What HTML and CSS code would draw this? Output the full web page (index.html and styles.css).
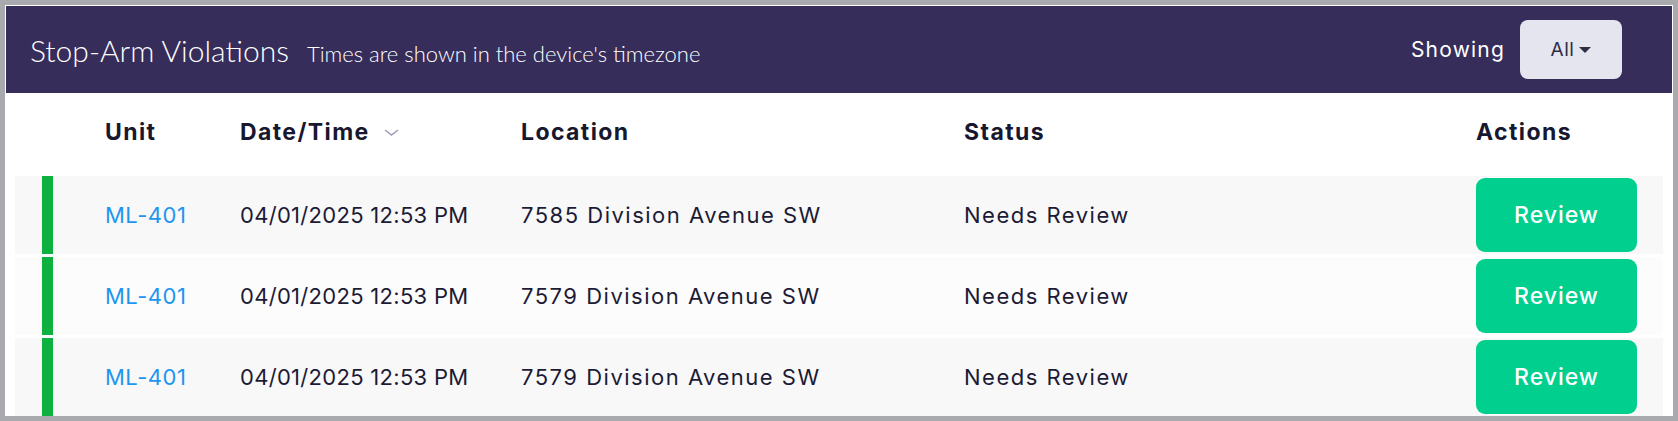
FILE: index.html
```html
<!DOCTYPE html>
<html lang="en">
<head>
<meta charset="utf-8">
<title>Stop-Arm Violations</title>
<link rel="stylesheet" href="styles.css">
</head>
<body>
<div class="frame">
  <header class="topbar">
    <div class="titles">
      <h1 class="title">Stop-Arm Violations</h1>
      <span class="subtitle">Times are shown in the device's timezone</span>
    </div>
    <div class="filter">
      <span class="showing">Showing</span>
      <button class="dropdown">All <span class="caret"></span></button>
    </div>
  </header>
  <div class="table">
    <div class="grid head">
      <span></span><span></span>
      <span class="th">Unit</span>
      <span class="th sort">Date/Time
        <svg class="chev" width="15" height="7" viewBox="0 0 15 7"><path d="M1 1 L7.5 6 L14 1" fill="none" stroke="#9c9cb3" stroke-width="1.5"/></svg>
      </span>
      <span class="th">Location</span>
      <span class="th">Status</span>
      <span class="th">Actions</span>
    </div>
    <div class="grid row odd">
      <span class="bar"></span><span></span>
      <a class="unit">ML-401</a>
      <span class="td num">04/01/2025 12:53 PM</span>
      <span class="td">7585 Division Avenue SW</span>
      <span class="td">Needs Review</span>
      <button class="review">Review</button>
    </div>
    <div class="grid row even">
      <span class="bar"></span><span></span>
      <a class="unit">ML-401</a>
      <span class="td num">04/01/2025 12:53 PM</span>
      <span class="td">7579 Division Avenue SW</span>
      <span class="td">Needs Review</span>
      <button class="review">Review</button>
    </div>
    <div class="grid row odd">
      <span class="bar"></span><span></span>
      <a class="unit">ML-401</a>
      <span class="td num">04/01/2025 12:53 PM</span>
      <span class="td">7579 Division Avenue SW</span>
      <span class="td">Needs Review</span>
      <button class="review">Review</button>
    </div>
  </div>
</div>
</body>
</html>
```
FILE: styles.css
```css
* { box-sizing: border-box; }
html, body { margin: 0; padding: 0; background: #ffffff; }
body { font-family: "Inter", "Open Sans", sans-serif; color: #1c1b36; }

.frame {
  width: 1678px;
  height: 421px;
  border: 5px solid #a9aaad;
  padding: 1px;
  overflow: hidden;
  background: #ffffff;
}

.topbar {
  height: 87px;
  background: #362d5b;
  display: flex;
  align-items: center;
  justify-content: space-between;
  padding: 0 50px 0 24px;
}
.titles { display: flex; align-items: baseline; gap: 18px; }
.title {
  margin: 0;
  font-family: "Lato", sans-serif;
  font-weight: 300;
  font-size: 30px;
  color: #ffffff;
}
.subtitle {
  font-family: "Lato", sans-serif;
  font-weight: 300;
  font-size: 22px;
  color: #ffffff;
}
.filter { display: flex; align-items: center; gap: 15px; }
.showing { color: #ffffff; font-size: 21px; letter-spacing: 1.2px; }
.dropdown {
  width: 102px;
  height: 59px;
  border: none;
  border-radius: 8px;
  background: #e5e5f0;
  color: #2f2d45;
  font-family: "Inter", sans-serif;
  font-size: 19px;
  letter-spacing: 0.5px;
  display: flex;
  align-items: center;
  justify-content: center;
  gap: 5px;
  padding: 0;
}
.caret {
  width: 0; height: 0;
  border-left: 6px solid transparent;
  border-right: 6px solid transparent;
  border-top: 6px solid #2f2d45;
  margin-top: 1px;
}

.table { padding: 0 9px; }
.grid {
  display: grid;
  grid-template-columns: 11px 52px 135px 281px 443px 512px 161px;
  padding: 0 26px 0 27px;
  align-items: center;
}
.head { height: 83px; padding-bottom: 6px; }
.th {
  font-weight: 700;
  font-size: 23px;
  letter-spacing: 1.4px;
  color: #17172f;
  display: flex;
  align-items: center;
}
.sort { gap: 14px; }
.chev { margin-top: 2px; }

.row { height: 78px; margin-bottom: 3px; }
.row.odd { background: #f8f8f8; }
.row.even { background: #fcfcfc; }
.bar { height: 78px; background: #0cb13f; }
.unit { color: #1e96ee; font-size: 22px; letter-spacing: 0.5px; text-decoration: none; }
.td { font-size: 22px; letter-spacing: 1.5px; color: #1c1b36; }
.td.num { letter-spacing: 0.3px; }
.review {
  height: 74px;
  border: none;
  border-radius: 9px;
  background: #00cf8e;
  color: #ffffff;
  font-family: "Inter", sans-serif;
  font-size: 23px;
  letter-spacing: 1px;
  font-weight: 500;
  padding: 0;
}
```
